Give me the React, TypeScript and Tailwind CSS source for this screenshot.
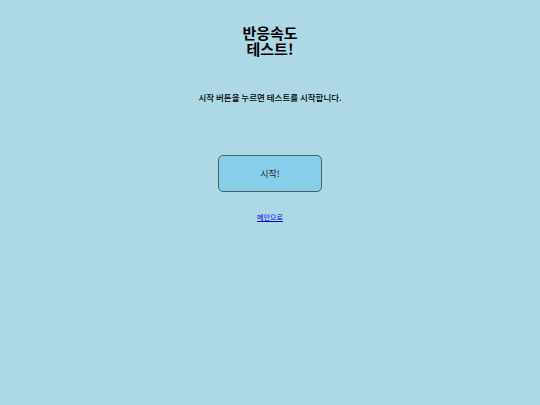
export default function App() {
  return (
    <div
      className="min-h-[405px] w-full bg-[#add8e6] flex flex-col items-center text-black"
      style={{ fontFamily: '"Noto Sans CJK KR", "Noto Sans", sans-serif' }}
    >
      <h1 className="mt-[25px] w-[70px] text-center text-[15px] leading-[16px] font-bold">
        반응속도 테스트!
      </h1>
      <p className="mt-[34px] text-[8.5px] leading-[12px] font-medium">
        시작 버튼을 누르면 테스트를 시작합니다.
      </p>
      <button className="mt-[52px] w-[104px] h-[37px] rounded-[5px] border-[1.5px] border-[#4d5e66] bg-[#87ceeb] text-[9px] text-[#222]">
        시작!
      </button>
      <a href="#" className="mt-[20px] text-[7px] leading-[10px] text-[#0000ee] underline">
        메인으로
      </a>
    </div>
  );
}
